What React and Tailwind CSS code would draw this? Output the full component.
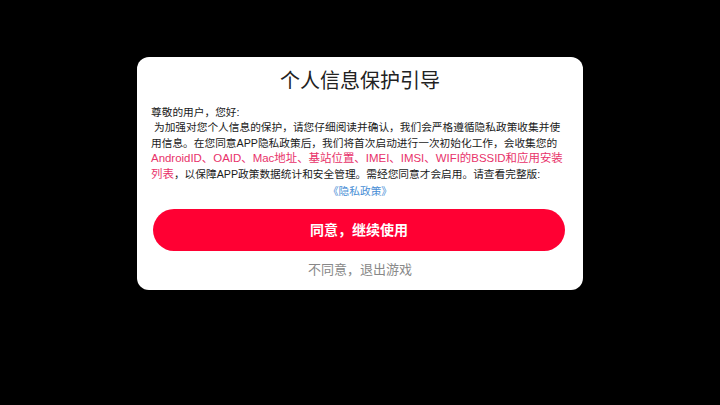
import React from 'react'

const Red = ({ children }) => <span className="text-[#e8326a] text-[11.45px]">{children}</span>

const App = () => {
  return (
    <div className="w-[720px] h-[405px] bg-black flex items-start justify-center pt-[57px]" style={{ fontFamily: '"Liberation Sans", "Noto Sans CJK SC", sans-serif' }}>
      <div className="w-[446px] h-[233px] bg-white rounded-[12px] flex flex-col">
        <h1 className="text-center text-[20px] leading-[28px] text-[#222] pt-[10px]">个人信息保护引导</h1>

        {/* body */}
        <div className="px-[14px] pt-[10px] text-[10.7px] leading-[15.4px] text-[#1a1a1a] whitespace-nowrap">
          <div>尊敬的用户，您好:</div>
          <div>&nbsp;为加强对您个人信息的保护，请您仔细阅读并确认，我们会严格遵循隐私政策收集并使</div>
          <div>用信息。在您同意APP隐私政策后，我们将首次启动进行一次初始化工作，会收集您的</div>
          <div className="h-[15.4px]"><Red>AndroidID、OAID、Mac地址、基站位置、IMEI、IMSI、WIFI的BSSID和应用安装</Red></div>
          <div className="h-[15.4px]"><Red>列表</Red>，以保障APP政策数据统计和安全管理。需经您同意才会启用。请查看完整版:</div>
          <div className="text-center text-[#4a8fd6] pt-[2px]">《隐私政策》</div>
        </div>

        <button className="mt-[10px] ml-[16px] w-[412px] h-[42px] rounded-full bg-[#ff0033] text-white text-[14px] font-bold">
          同意，继续使用
        </button>
        <div className="text-center text-[13px] text-[#888] mt-[9px]">不同意，退出游戏</div>
      </div>
    </div>
  )
}

export default App
